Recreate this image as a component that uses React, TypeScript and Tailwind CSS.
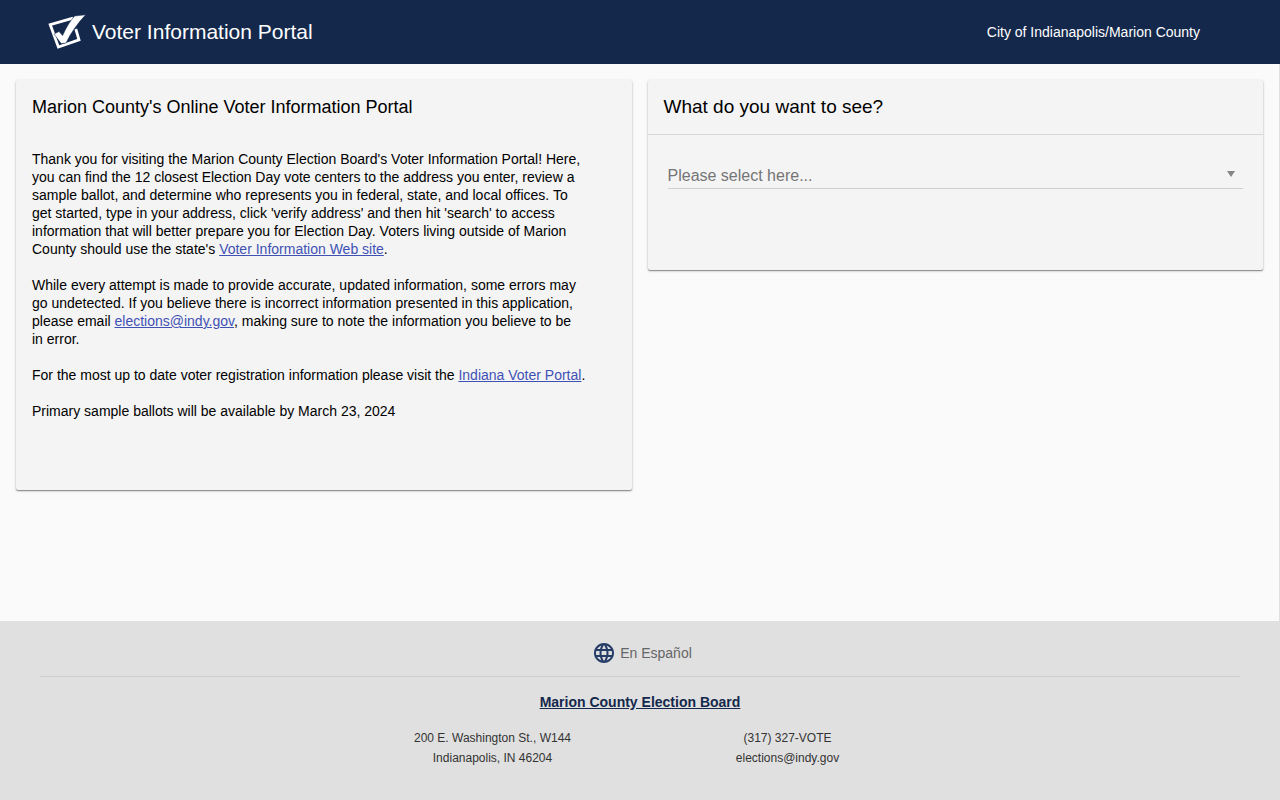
import React from "react";
import { MdLanguage } from "react-icons/md";

const cardClass =
  "rounded-xs bg-[#f4f4f4] shadow-[0_1px_3px_rgba(0,0,0,0.2),0_1px_1px_rgba(0,0,0,0.35)]";
const linkClass = "text-[#3f51b5] underline";

const Logo = () => (
  <svg className="h-10 w-10" viewBox="0 0 40 40" aria-hidden="true">
    <path
      d="M25 6.2 L2.2 12.6 L10.4 35 L31 27.8 L27.8 17"
      fill="none"
      stroke="white"
      strokeWidth="2.8"
    />
    <path
      d="M6 22 L11 19.6 L14.6 23.6 C18 16 22 9 26.6 4 L37.6 2.8 C29.5 11.5 23 20.5 18 31 L13.2 31.6 Z"
      fill="white"
      stroke="#14284b"
      strokeWidth="0.5"
    />
  </svg>
);

const Header = () => (
  <header className="flex h-16 items-center justify-between bg-[#14284b] pr-20 pl-12 text-white">
    <div className="flex items-center gap-1">
      <Logo />
      <h1 className="text-[21px]">Voter Information Portal</h1>
    </div>
    <a href="#city" className="text-sm">
      City of Indianapolis/Marion County
    </a>
  </header>
);

const Welcome = () => (
  <section className={`${cardClass} h-[410px]`}>
    <h2 className="px-4 pt-[13px] text-lg leading-7">
      Marion County's Online Voter Information Portal
    </h2>
    <div className="px-4 pt-[29px] text-sm leading-[18px]">
      <div className="flex max-w-[95%] flex-col gap-[18px]">
        <p>
          Thank you for visiting the Marion County Election Board's Voter
          Information Portal! Here, you can find the 12 closest Election Day
          vote centers to the address you enter, review a sample ballot, and
          determine who represents you in federal, state, and local offices. To
          get started, type in your address, click 'verify address' and then hit
          'search' to access information that will better prepare you for
          Election Day. Voters living outside of Marion County should use the
          state's{" "}
          <a href="#state" className={linkClass}>
            Voter Information Web site
          </a>
          .
        </p>
        <p>
          While every attempt is made to provide accurate, updated information,
          some errors may go undetected. If you believe there is incorrect
          information presented in this application, please email{" "}
          <a href="mailto:elections@indy.gov" className={linkClass}>
            elections@indy.gov
          </a>
          , making sure to note the information you believe to be in&nbsp;error.
        </p>
        <p>
          For the most up to date voter registration information please visit
          the{" "}
          <a href="#indiana" className={linkClass}>
            Indiana Voter Portal
          </a>
          .
        </p>
        <p>Primary sample ballots will be available by March 23, 2024</p>
      </div>
    </div>
  </section>
);

const Picker = () => (
  <section className={`${cardClass} h-[190px]`}>
    <h2 className="border-b border-[#d8d8d8] px-4 pt-[13px] pb-[13px] text-[19px] leading-7">
      <label htmlFor="view">What do you want to see?</label>
    </h2>
    <div className="px-5 pt-7">
      <div className="relative">
        <select
          id="view"
          className="block h-[26px] w-full appearance-none rounded-none border-b border-[#d0d0d0] bg-transparent text-base text-[#757575] outline-none"
        >
          <option>Please select here...</option>
        </select>
        <svg
          className="pointer-events-none absolute top-2 right-2 h-[6px] w-2"
          viewBox="0 0 8 6"
          aria-hidden="true"
        >
          <path d="M0 0H8L4 6Z" fill="#858585" />
        </svg>
      </div>
    </div>
  </section>
);

const Footer = () => (
  <footer className="bg-[#e0e0e0] px-10 pt-5 pb-8 text-center">
    <button
      type="button"
      className="mx-auto flex h-6 items-center gap-1 pl-1 text-sm text-[#666666]"
    >
      <MdLanguage className="h-6 w-6 text-[#243c66]" />
      En Español
    </button>
    <hr className="mt-[11px] border-[#cecece]" />
    <a
      href="#board"
      className="mt-[15px] inline-block text-sm font-bold text-[#14284b] underline"
    >
      Marion County Election Board
    </a>
    <div className="mx-auto mt-[14px] grid max-w-[590px] grid-cols-2 text-xs leading-5 text-[#333333]">
      <address className="not-italic">
        200 E. Washington St., W144
        <br />
        Indianapolis, IN 46204
      </address>
      <div>
        <p>(317) 327-VOTE</p>
        <a href="mailto:elections@indy.gov">elections@indy.gov</a>
      </div>
    </div>
  </footer>
);

const App = () => {
  return (
    <div className="flex min-h-screen flex-col bg-[#fafafa] font-['Liberation_Sans',Arial,sans-serif] text-black">
      <Header />
      <main className="grid flex-1 grid-cols-2 items-start gap-4 border-r border-[#e0e0e0] p-4">
        <Welcome />
        <Picker />
      </main>
      <Footer />
    </div>
  );
};

export default App;
